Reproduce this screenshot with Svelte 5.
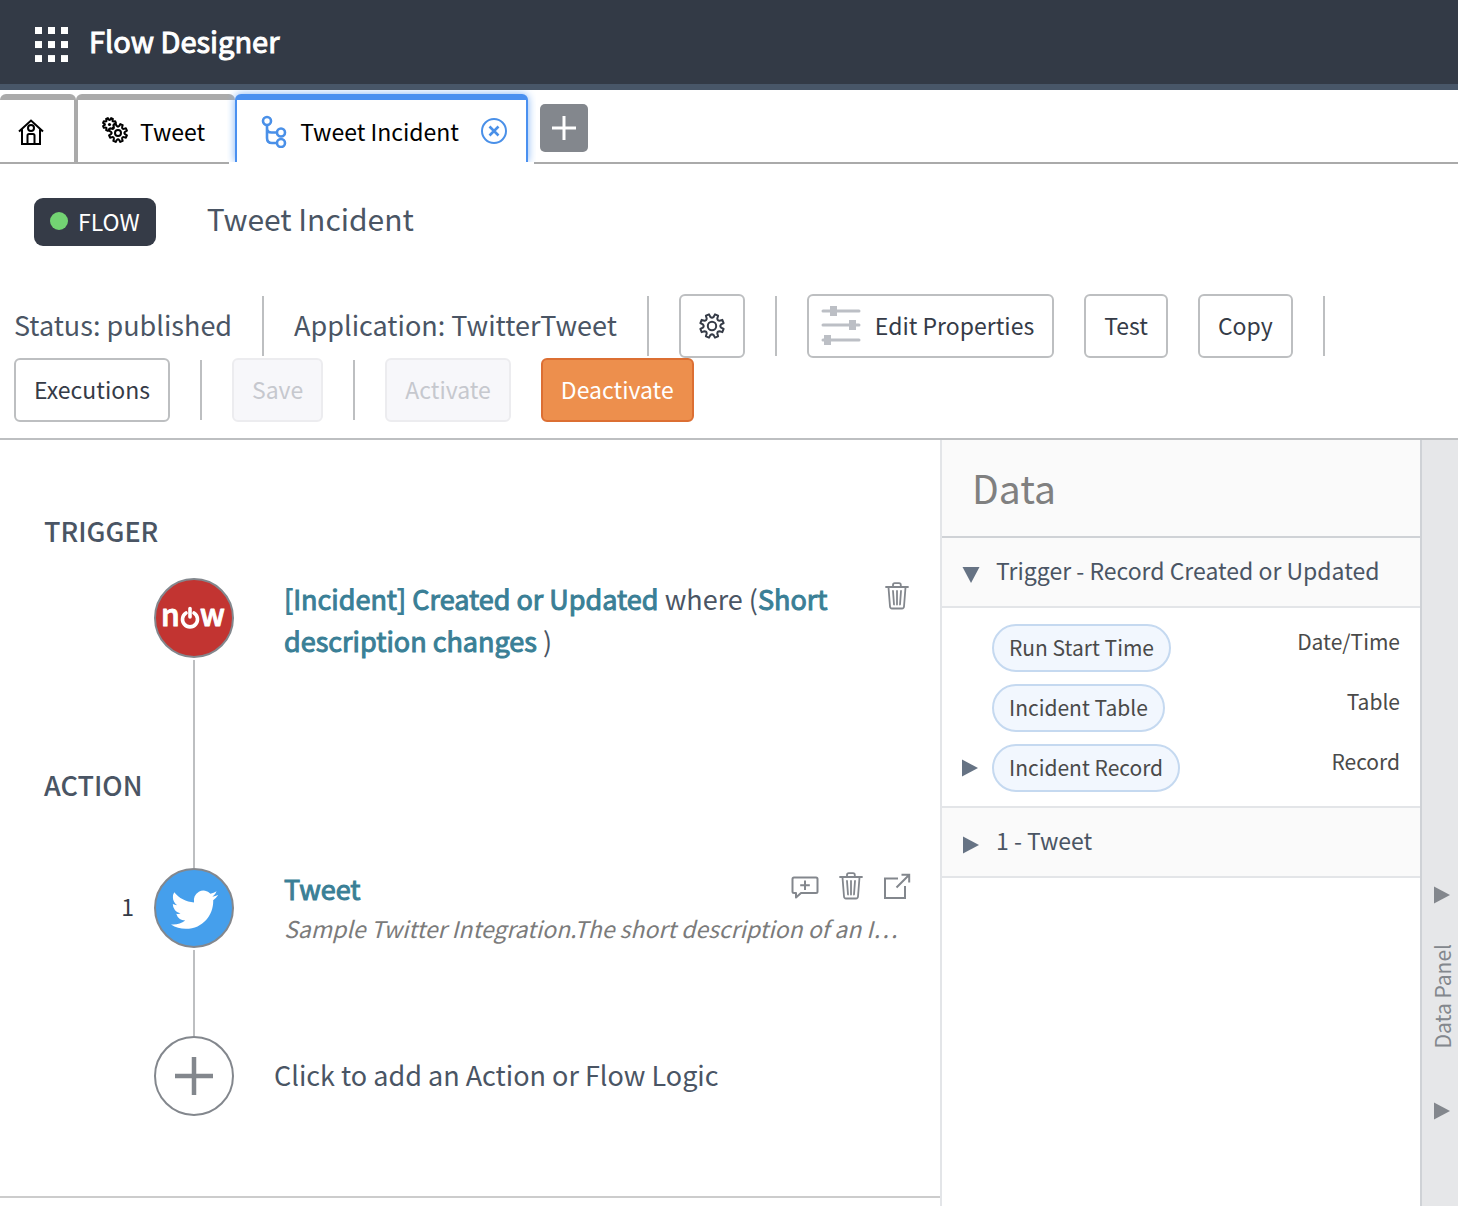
<script>
  // Builds a closed outline of a gear wheel, with its first tooth offset by half a pitch.
  function gear(cx, cy, outer, inner, teeth) {
    const step = (Math.PI * 2) / teeth;
    const at = (r, a) =>
      `${(cx + r * Math.sin(a)).toFixed(2)} ${(cy - r * Math.cos(a)).toFixed(2)}`;
    let d = '';
    for (let i = 0; i < teeth; i++) {
      const mid = (i + 0.5) * step;
      d += `${i ? 'L' : 'M'}${at(inner + 0.8, mid - step * 0.28)}`;
      d += `L${at(outer, mid - step * 0.18)}L${at(outer, mid + step * 0.18)}`;
      d += `L${at(inner + 0.8, mid + step * 0.28)}`;
      d += `Q${at(inner - 0.8, mid + step * 0.5)} ${at(inner + 0.8, mid + step * 0.72)}`;
    }
    return d + 'Z';
  }

  const variables = [
    { name: 'Run Start Time', type: 'Date/Time', expandable: false },
    { name: 'Incident Table', type: 'Table', expandable: false },
    { name: 'Incident Record', type: 'Record', expandable: true }
  ];
  const dots = [0, 13, 26];
</script>

{#snippet trash()}
  <svg width="24" height="28" viewBox="0 0 24 28" fill="none" stroke="currentColor" stroke-width="1.8" stroke-linecap="round" stroke-linejoin="round">
    <path d="M1 5H23M8 5V3Q8 1.200 9.800 1.200H14Q15.800 1.200 15.800 3V5M3.500 5.500L5 24.500Q5.200 26.500 7 26.500H17Q18.800 26.500 19 24.500L20.500 5.500M8 9L9 22.500M12 9V22.500M16 9L15 22.500" />
  </svg>
{/snippet}

{#snippet caret()}
  <svg class="caret" width="16" height="18" viewBox="0 0 16 18" fill="currentColor"><path d="M0 0.500L16 9L0 17.500Z" /></svg>
{/snippet}

<div class="page">
  <header class="topbar">
    <button class="launcher" aria-label="Applications">
      <svg width="34" height="35" viewBox="0 0 34 35" fill="#fff">
        {#each dots as x}
          {#each dots as y}
            <rect x={x} y={y * 1.08} width="7" height="7" />
          {/each}
        {/each}
      </svg>
    </button>
    <span class="brand">Flow Designer</span>
  </header>

  <nav class="tabs">
    <button class="tab home" aria-label="Home">
      <svg width="26" height="28" viewBox="0 0 26 28" fill="none" stroke="#000" stroke-width="2">
        <path d="M1 14.500L13 3.500L25 14.500M4 12.500V27H22V12.500M9.500 27V18.500Q9.500 17 11 17H15Q16.500 17 16.500 18.500V27" />
        <circle cx="13" cy="11" r="3" />
      </svg>
    </button>
    <button class="tab tweet">
      <svg width="26" height="28" viewBox="0 0 26 28" fill="none" stroke="#000" stroke-width="2" stroke-linejoin="round">
        <path d={gear(7.5, 7.5, 6.6, 4.6, 8)} />
        <circle cx="7.500" cy="7.500" r="1.600" fill="#000" stroke="none" />
        <path d={gear(16, 16, 9.2, 6.4, 8)} fill="#fff" />
        <circle cx="16" cy="16" r="3" />
      </svg>
      <span>Tweet</span>
    </button>
    <div class="tab active">
      <button class="tab-main">
        <svg width="26" height="34" viewBox="0 0 26 34" fill="none" stroke="#4a90e8" stroke-width="2.600">
          <circle cx="6" cy="7" r="4" />
          <circle cx="20" cy="18.500" r="4" />
          <circle cx="20" cy="29" r="4" />
          <path d="M6 11V24Q6 29 11 29H16M6 14Q6 18.500 10.500 18.500H16" />
        </svg>
        <span>Tweet Incident</span>
      </button>
      <button class="close" aria-label="Close tab">
        <svg width="26" height="26" viewBox="0 0 26 26" fill="none" stroke="#4a90e8">
          <circle cx="13" cy="13" r="12" stroke-width="2" />
          <path d="M8.500 8.500L17.500 17.500M17.500 8.500L8.500 17.500" stroke-width="2.600" />
        </svg>
      </button>
    </div>
    <button class="new-tab" aria-label="New tab">
      <svg width="26" height="26" viewBox="0 0 26 26" stroke="#fff" stroke-width="3"><path d="M13 1V25M1 13H25" /></svg>
    </button>
  </nav>

  <section class="title-row">
    <span class="badge"><i class="dot"></i>FLOW</span>
    <h1>Tweet Incident</h1>
  </section>

  <section class="toolbar">
    <span class="meta">Status: published</span>
    <i class="sep"></i>
    <span class="meta">Application: TwitterTweet</span>
    <i class="sep"></i>
    <button class="btn settings" aria-label="Settings">
      <svg width="26" height="26" viewBox="0 0 26 26" fill="none" stroke="#353b47" stroke-width="2" stroke-linejoin="round">
        <path d={gear(13, 13, 12, 8.4, 8)} />
        <circle cx="13" cy="13" r="4.200" />
      </svg>
    </button>
    <i class="sep"></i>
    <button class="btn edit">
      <svg width="40" height="42" viewBox="0 0 40 42" fill="#bcbfc5" stroke="#bcbfc5" stroke-width="3" stroke-linecap="round">
        <path d="M2 7H38M2 21H38M2 36H38" />
        <g stroke="none">
          <rect x="9" y="2" width="7" height="10" />
          <rect x="28" y="16" width="7" height="10" />
          <rect x="3" y="31" width="7" height="10" />
        </g>
      </svg>
      Edit Properties
    </button>
    <button class="btn">Test</button>
    <button class="btn">Copy</button>
    <i class="sep"></i>
    <button class="btn">Executions</button>
    <i class="sep"></i>
    <button class="btn" disabled>Save</button>
    <i class="sep"></i>
    <button class="btn" disabled>Activate</button>
    <button class="btn primary">Deactivate</button>
  </section>

  <main>
    <section class="canvas">
      <h2>TRIGGER</h2>
      <div class="step trigger">
        <h2 class="side">ACTION</h2>
        <div class="track">
          <span class="node now">
            <svg width="76" height="76" viewBox="0 0 76 76" fill="#fff">
              <text class="logo" x="5" y="46">n</text>
              <text class="logo" x="44" y="46">w</text>
              <path d="M30 33A7.500 7.500 0 1 0 38 33M34 28.500V37" fill="none" stroke="#fff" stroke-width="3.600" stroke-linecap="round" />
            </svg>
          </span>
          <i class="line"></i>
        </div>
        <div class="body">
          <p class="summary"><a href="#trigger">[Incident] Created or Updated</a> where (<a href="#condition">Short description changes</a> )</p>
          <div class="actions">
            <button class="icon" aria-label="Delete trigger">{@render trash()}</button>
          </div>
        </div>
      </div>

      <div class="step action">
        <span class="number">1</span>
        <div class="track">
          <span class="node twitter">
            <svg width="47" height="47" viewBox="0 -0.600 24 24" fill="#fff">
              <path d="M23.953 4.570a10 10 0 01-2.825.775 4.958 4.958 0 002.163-2.723c-.951.555-2.005.959-3.127 1.184a4.920 4.920 0 00-8.384 4.482C7.690 8.095 4.067 6.130 1.640 3.162a4.822 4.822 0 00-.666 2.475c0 1.710.870 3.213 2.188 4.096a4.904 4.904 0 01-2.228-.616v.060a4.923 4.923 0 003.946 4.827 4.996 4.996 0 01-2.212.085 4.936 4.936 0 004.604 3.417 9.867 9.867 0 01-6.102 2.105c-.390 0-.779-.023-1.170-.067a13.995 13.995 0 007.557 2.209c9.053 0 13.998-7.496 13.998-13.985 0-.210 0-.420-.015-.630A9.935 9.935 0 0024 4.590z" />
            </svg>
          </span>
          <i class="line"></i>
        </div>
        <div class="body">
          <div class="text">
            <a href="#tweet">Tweet</a>
            <p class="note">Sample Twitter Integration.The short description of an I…</p>
          </div>
          <div class="actions over">
            <button class="icon" aria-label="Add comment">
              <svg width="28" height="28" viewBox="0 0 28 28" fill="none" stroke="currentColor" stroke-width="2" stroke-linejoin="round">
                <path d="M3 5.500H25Q26.500 5.500 26.500 7V19.500Q26.500 21 25 21H10L5 25.500V21H3Q1.500 21 1.500 19.500V7Q1.500 5.500 3 5.500ZM14 8.500V18M9.200 13.200H18.800" />
              </svg>
            </button>
            <button class="icon" aria-label="Delete action">{@render trash()}</button>
            <button class="icon" aria-label="Open action">
              <svg width="28" height="28" viewBox="0 0 28 28" fill="none" stroke="currentColor" stroke-width="2">
                <path d="M15 6.500H2V26H22V14M13.500 15.500L26 3M18.500 2.800H26.200V10.500" />
              </svg>
            </button>
          </div>
        </div>
      </div>

      <button class="step add">
        <span></span>
        <span class="node">
          <svg width="40" height="40" viewBox="0 0 40 40" stroke="#83878d" stroke-width="4.500"><path d="M20 1V39M1 20H39" /></svg>
        </span>
        <span class="add-label">Click to add an Action or Flow Logic</span>
      </button>
    </section>

    <aside class="data">
      <h3>Data</h3>
      <button class="group open" aria-expanded="true">
        {@render caret()}
        <span>Trigger - Record Created or Updated</span>
      </button>
      <ul>
        {#each variables as v}
          <li>
            <span class="toggle">
              {#if v.expandable}
                <button class="icon slate" aria-label="Expand {v.name}">{@render caret()}</button>
              {/if}
            </span>
            <span class="pill">{v.name}</span>
            <span class="type">{v.type}</span>
          </li>
        {/each}
      </ul>
      <button class="group" aria-expanded="false">
        {@render caret()}
        <span>1 - Tweet</span>
      </button>
    </aside>

    <button class="rail">
      {@render caret()}
      <span>Data Panel</span>
      {@render caret()}
    </button>
  </main>
</div>

<style>
  :global(body) {
    background: #fff;
  }
  .page {
    display: flex;
    flex-direction: column;
    min-height: 100vh;
    font-family: 'Noto Sans CJK KR', 'Noto Sans', sans-serif;
    font-size: 23px;
    line-height: 32px;
    color: #353b47;
  }
  .page * {
    box-sizing: border-box;
  }
  button {
    font: inherit;
    color: inherit;
    background: none;
    border: 0;
    padding: 0;
    cursor: pointer;
  }
  h1,
  h2,
  h3,
  p,
  ul {
    margin: 0;
    padding: 0;
    font-weight: 400;
  }
  svg {
    display: block;
    flex: none;
  }

  .topbar {
    display: flex;
    align-items: center;
    gap: 20px;
    height: 90px;
    padding: 0 35px;
    background: #333a46;
    border-bottom: 6px solid #485668;
  }
  .launcher {
    padding-top: 4px;
  }
  .brand {
    padding-bottom: 4px;
    color: #fff;
    font-size: 29px;
    -webkit-text-stroke: 1px #fff;
  }

  .tabs {
    display: flex;
    height: 74px;
    padding-top: 4px;
    border-bottom: 2px solid #aaa;
    color: #000;
  }
  .tab {
    display: flex;
    align-items: center;
    gap: 12px;
    padding: 0 30px 0 24px;
    border: 2px solid #aaa;
    border-width: 6px 2px 0;
    border-radius: 6px 6px 0 0;
  }
  .tab.home {
    padding: 0 30px 0 18px;
    border-left: 0;
  }
  .tab.tweet {
    border-right: 0;
  }
  .tab.active {
    position: relative;
    gap: 22px;
    padding: 0 19px 0 24px;
    border-color: #4a90f0;
    background: #fff;
    box-shadow: 0 0 8px #7fb2f5;
    clip-path: inset(-4px -8px -2px -8px);
  }
  .tab.active::after {
    content: '';
    position: absolute;
    left: -8px;
    right: -8px;
    bottom: -8px;
    height: 8px;
    background: #fff;
  }
  .tab-main {
    display: flex;
    align-items: center;
    gap: 13px;
  }
  .tab span {
    padding-bottom: 1px;
  }
  .new-tab {
    display: grid;
    place-items: center;
    width: 48px;
    height: 48px;
    margin: 10px 12px;
    background: #83878d;
    border-radius: 5px;
  }

  .title-row {
    display: flex;
    align-items: flex-start;
    gap: 51px;
    padding: 34px 34px 48px;
  }
  .badge {
    display: flex;
    align-items: center;
    gap: 10px;
    height: 48px;
    padding: 0 16px 2px;
    border-radius: 9px;
    background: #353b47;
    color: #fff;
  }
  .dot {
    width: 18px;
    height: 18px;
    border-radius: 50%;
    background: #73d373;
  }
  h1 {
    font-size: 30px;
    line-height: 40px;
    color: #4a5564;
  }

  .toolbar {
    display: flex;
    flex-wrap: wrap;
    align-items: center;
    column-gap: 30px;
    padding: 0 14px 16px;
    border-bottom: 2px solid #bdbfc1;
  }
  .meta {
    padding-bottom: 2px;
    font-size: 27px;
    color: #4a5564;
  }
  .sep {
    width: 2px;
    height: 60px;
    background: #bdbfc1;
  }
  .btn {
    display: flex;
    align-items: center;
    gap: 14px;
    height: 64px;
    padding: 0 18px 2px;
    border: 2px solid #bdbfc1;
    border-radius: 6px;
    background: #fff;
  }
  .btn.settings {
    padding-bottom: 0;
  }
  .btn.edit {
    padding-left: 12px;
  }
  .btn:disabled {
    color: #c6c8ce;
    background: #f7f7fa;
    border-color: #ececef;
  }
  .btn.primary {
    color: #fff;
    background: #ed8f4d;
    border-color: #dc6f33;
  }

  main {
    flex: 1;
    display: grid;
    grid-template-columns: 1fr 482px 36px;
  }
  .canvas {
    min-width: 0;
    margin-bottom: 8px;
    padding: 75px 28px 80px 44px;
    border-bottom: 2px solid #ccc;
  }
  h2 {
    font-size: 27px;
    font-weight: 500;
    color: #4a5564;
  }
  .step {
    display: grid;
    grid-template-columns: 110px 80px minmax(0, 1fr);
    width: 100%;
    text-align: left;
  }
  .trigger {
    min-height: 290px;
    margin-top: 31px;
  }
  .action {
    min-height: 168px;
  }
  .side {
    align-self: end;
    padding-bottom: 67px;
  }
  .number {
    padding: 22px 20px 0 0;
    text-align: right;
  }
  .track {
    display: flex;
    flex-direction: column;
    align-items: center;
    gap: 2px;
  }
  .node {
    display: grid;
    place-items: center;
    flex: none;
    width: 80px;
    height: 80px;
    border: 2px solid #83878d;
    border-radius: 50%;
    background: #fff;
  }
  .now {
    background: #c23431;
  }
  .twitter {
    background: #459fec;
  }
  .logo {
    font: 500 30px 'Noto Sans CJK KR', sans-serif;
    stroke: #fff;
    stroke-width: 1px;
    stroke-linejoin: round;
  }
  .line {
    flex: 1;
    width: 2px;
    background: #bdbfc1;
  }
  .body {
    position: relative;
    display: flex;
    justify-content: space-between;
    padding-left: 50px;
    font-size: 27px;
    line-height: 42px;
    color: #4a5564;
  }
  a {
    color: #3a7f96;
    text-decoration: none;
    -webkit-text-stroke: 1px #3a7f96;
  }
  .summary {
    max-width: 560px;
  }
  .text {
    min-width: 0;
  }
  .note {
    overflow: hidden;
    white-space: nowrap;
    text-overflow: ellipsis;
    font-size: 23px;
    line-height: 36px;
    font-style: italic;
    color: #7b7b7b;
  }
  .actions {
    display: flex;
    gap: 20px;
    height: 28px;
    margin: 4px 3px 0 0;
  }
  .actions.over {
    position: absolute;
    top: 0;
    right: 0;
    margin-right: 1px;
  }
  .icon {
    color: #83878d;
  }
  .add {
    align-items: center;
  }
  .add-label {
    padding: 0 0 2px 40px;
    font-size: 27px;
    color: #4a5564;
  }

  .data {
    border: 2px solid #e3e5e8;
    border-width: 0 2px;
    border-right-color: #cfd2d6;
  }
  h3 {
    height: 98px;
    padding: 22px 30px 0;
    border-bottom: 2px solid #cfd2d6;
    background: #fafafa;
    font-size: 39px;
    line-height: 50px;
    color: #808080;
  }
  .group {
    display: flex;
    align-items: center;
    gap: 17px;
    width: 100%;
    height: 70px;
    padding: 0 21px;
    border-bottom: 2px solid #e3e5e8;
    background: #fafafa;
    color: #4a5564;
    text-align: left;
  }
  .group span {
    padding-bottom: 4px;
  }
  .group .caret {
    color: #667384;
    margin-top: 6px;
  }
  .group.open .caret {
    transform: rotate(90deg);
  }
  ul {
    display: grid;
    gap: 12px;
    padding: 16px 20px 14px;
    border-bottom: 2px solid #e3e5e8;
    list-style: none;
    font-size: 21px;
    color: #4a4a4a;
  }
  li {
    display: flex;
  }
  .toggle {
    display: flex;
    align-items: center;
    width: 30px;
  }
  .slate {
    color: #667384;
  }
  .pill {
    height: 48px;
    padding: 5px 15px;
    border: 2px solid #c5d9f0;
    border-radius: 24px;
    background: #f2f7fe;
  }
  .type {
    margin-left: auto;
    padding-top: 1px;
  }
  .rail {
    display: flex;
    flex-direction: column;
    align-items: center;
    justify-content: flex-end;
    gap: 40px;
    padding: 0 0 86px 4px;
    background: #e6e7e9;
    color: #83878d;
    font-size: 21px;
  }
  .rail span {
    margin-bottom: 14px;
    writing-mode: vertical-rl;
    transform: rotate(180deg);
  }
</style>
